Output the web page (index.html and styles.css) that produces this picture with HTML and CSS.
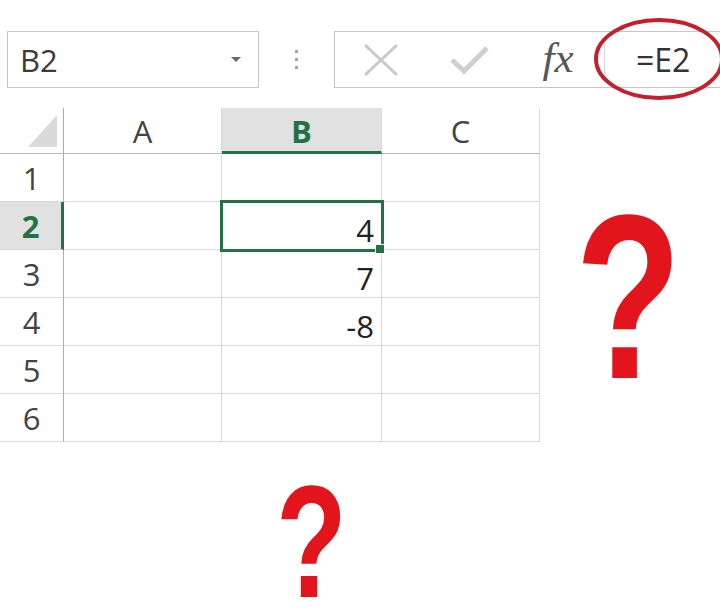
FILE: index.html
```html
<!DOCTYPE html>
<html lang="en">
<head>
    <meta charset="UTF-8">
    <title>B2 =E2</title>
    <link rel="stylesheet" href="styles.css">
</head>
<body>
<div class="toolbar">
    <div class="name-box">
        <span>B2</span>
        <i class="drop"></i>
    </div>
    <div class="grip"><b></b><b></b><b></b></div>
    <div class="formula-bar">
        <span class="fb-btn cancel">
            <svg width="36" height="32" viewBox="0 0 36 32"><path d="M2 1 L34 31 M34 1 L2 31" stroke="#cacaca" stroke-width="3" fill="none"/></svg>
        </span>
        <span class="fb-btn enter">
            <svg width="40" height="30" viewBox="0 0 40 30"><path d="M3 15 L15 26 L38 3" stroke="#cfcfcf" stroke-width="5" fill="none"/></svg>
        </span>
        <span class="fb-btn fx">fx</span>
        <div class="formula-input">=E2</div>
        <!-- 公式外面的红圈 -->
        <svg class="ring" width="134" height="84" viewBox="0 0 134 84"><ellipse cx="66" cy="42" rx="63" ry="39" stroke="#c3202d" stroke-width="4" fill="none"/></svg>
    </div>
</div>

<div class="sheet">
    <div class="grid">
        <div class="corner"><i></i></div>
        <div class="col-head">A</div>
        <div class="col-head active">B</div>
        <div class="col-head">C</div>

        <div class="row-head">1</div><div class="cell"></div><div class="cell"></div><div class="cell"></div>
        <div class="row-head active">2</div><div class="cell"></div><div class="cell num selected">4</div><div class="cell"></div>
        <div class="row-head">3</div><div class="cell"></div><div class="cell num">7</div><div class="cell"></div>
        <div class="row-head">4</div><div class="cell"></div><div class="cell num">-8</div><div class="cell"></div>
        <div class="row-head">5</div><div class="cell"></div><div class="cell"></div><div class="cell"></div>
        <div class="row-head">6</div><div class="cell"></div><div class="cell"></div><div class="cell"></div>
    </div>
    <div class="mark big">?</div>
</div>
<div class="mark small">?</div>
</body>
</html>
```

FILE: styles.css
```css
* {
    margin: 0;
    padding: 0;
    box-sizing: border-box;
}

body {
    width: 720px;
    height: 615px;
    overflow: hidden;
    background: #ffffff;
    font-family: "Open Sans", "Noto Sans", sans-serif;
    color: #333333;
}

/* 名称框和编辑栏 */
.toolbar {
    display: flex;
    align-items: center;
    height: 57px;
    margin-top: 31px;
    padding-left: 7px;
}

.name-box {
    width: 252px;
    height: 57px;
    border: 1px solid #c6c6c6;
    display: flex;
    align-items: center;
    justify-content: space-between;
    padding: 0 17px 0 12px;
    font-size: 31px;
    color: #3b3b3b;
}

.drop {
    width: 0;
    height: 0;
    border-left: 5px solid transparent;
    border-right: 5px solid transparent;
    border-top: 5px solid #6b6b6b;
}

.grip {
    width: 75px;
    display: flex;
    flex-direction: column;
    align-items: center;
    gap: 5px;
}

.grip b {
    width: 3px;
    height: 3px;
    background: #a6a6a6;
}

.formula-bar {
    flex: 1;
    height: 57px;
    border: 1px solid #c6c6c6;
    border-right: none;
    display: flex;
    position: relative;
}

.fb-btn {
    display: flex;
    align-items: center;
    justify-content: center;
    height: 100%;
}

.cancel {
    width: 91px;
}

.enter {
    width: 86px;
}

.fx {
    width: 92px;
    font-family: "Liberation Serif", serif;
    font-style: italic;
    font-size: 43px;
    color: #575757;
    padding-bottom: 4px;
}

.formula-input {
    flex: 1;
    margin: 6px 0;
    border-left: 1px solid #d4d4d4;
    padding-left: 31px;
    font-size: 32px;
    line-height: 43px;
    color: #333333;
}

.ring {
    position: absolute;
    left: 258px;
    top: -15px;
}

/* 表格区域 */
.sheet {
    display: flex;
    align-items: flex-start;
    margin-top: 20px;
}

.grid {
    display: grid;
    grid-template-columns: 64px 158px 160px 158px;
    grid-template-rows: 46px repeat(6, 48px);
}

.corner {
    border-right: 1px solid #ababab;
    border-bottom: 1px solid #b8b8b8;
    display: flex;
    justify-content: flex-end;
    align-items: flex-end;
    padding: 0 6px 6px 0;
}

.corner i {
    width: 29px;
    height: 32px;
    background: #dadada;
    clip-path: polygon(100% 0, 100% 100%, 0 100%);
}

.col-head {
    border-right: 1px solid #d9d9d9;
    border-bottom: 1px solid #b8b8b8;
    text-align: center;
    font-size: 31px;
    line-height: 46px;
    color: #444444;
}

.col-head.active {
    background: #e1e1e1;
    color: #217346;
    font-weight: 700;
    border-bottom: 3px solid #217346;
}

.row-head {
    border-right: 1px solid #ababab;
    border-bottom: 1px solid #d9d9d9;
    text-align: center;
    font-size: 31px;
    line-height: 48px;
    color: #444444;
}

.row-head.active {
    background: #e1e1e1;
    color: #217346;
    font-weight: 700;
    border-right: 3px solid #217346;
}

.cell {
    border-right: 1px solid #d9d9d9;
    border-bottom: 1px solid #d9d9d9;
}

.num {
    text-align: right;
    padding: 8px 7px 0 0;
    font-size: 31px;
    line-height: 40px;
    color: #222222;
}

.selected {
    position: relative;
    outline: 3px solid #217346;
    outline-offset: -1px;
}

/* 填充柄 */
.selected::after {
    content: "";
    position: absolute;
    right: -4px;
    bottom: -5px;
    width: 8px;
    height: 8px;
    background: #217346;
    border: 1px solid #ffffff;
}

/* 红色问号 */
.mark {
    font-family: "Liberation Sans", sans-serif;
    font-weight: 700;
    line-height: 0.8;
    color: #e3151c;
    transform-origin: left top;
}

.big {
    font-size: 234px;
    margin: 96px 0 0 35px;
    transform: scaleX(0.745);
}

.small {
    font-size: 160px;
    margin: 36px 0 0 276px;
    transform: scaleX(0.725);
}
```
